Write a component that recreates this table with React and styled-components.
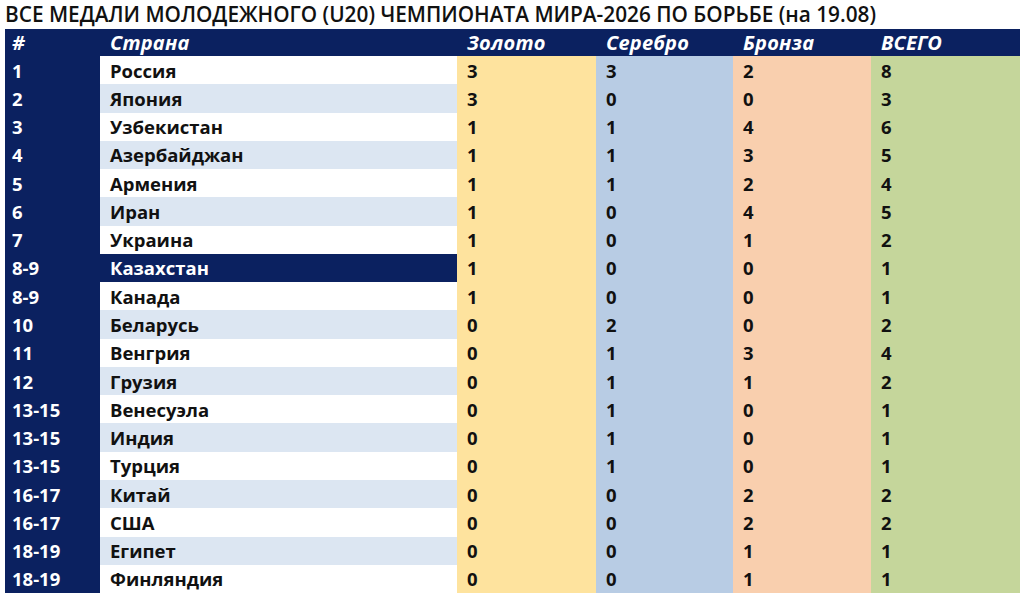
import React from "react";
import styled, { createGlobalStyle } from "styled-components";

const GlobalStyle = createGlobalStyle`
  body {
    margin: 0;
    background: #ffffff;
    font-family: "Open Sans", "Noto Sans", sans-serif;
  }
`;

const colors = {
  navy: "#0b2160",
  light: "#dce6f2",
  gold: "#fee39e",
  silver: "#b8cce4",
  bronze: "#f9cfae",
  total: "#c5d69b",
};

const Page = styled.div`
  width: 1024px;
  height: 599px;
  overflow: hidden;
  display: flex;
  flex-direction: column;
`;

const Title = styled.h1`
  margin: 0;
  height: 29px;
  padding-left: 5px;
  font-size: 20.8px;
  line-height: 28px;
  font-weight: 600;
  color: #111;
  white-space: nowrap;
`;

const Table = styled.div`
  margin: 0 4px 0 5px;
  display: grid;
  grid-template-columns: 95px 357px 139px 137px 138px 1fr;
  grid-auto-rows: 28.27px;
  grid-template-rows: 27px;
`;

const HeadCell = styled.div`
  background: ${colors.navy};
  color: #fff;
  font-style: italic;
  font-weight: 700;
  font-size: 20px;
  letter-spacing: 0.2px;
  display: flex;
  align-items: center;
  padding-left: ${(p) => (p.$first ? "7px" : "10px")};
`;

const Cell = styled.div`
  background: ${(p) => p.$bg};
  color: ${(p) => (p.$dark ? "#fff" : "#111")};
  font-weight: 700;
  font-size: 18.5px;
  display: flex;
  align-items: center;
  padding-left: ${(p) => (p.$first ? "7px" : "10px")};
  white-space: nowrap;
`;

const rows = [
  ["1", "Россия", 3, 3, 2, 8],
  ["2", "Япония", 3, 0, 0, 3],
  ["3", "Узбекистан", 1, 1, 4, 6],
  ["4", "Азербайджан", 1, 1, 3, 5],
  ["5", "Армения", 1, 1, 2, 4],
  ["6", "Иран", 1, 0, 4, 5],
  ["7", "Украина", 1, 0, 1, 2],
  ["8-9", "Казахстан", 1, 0, 0, 1],
  ["8-9", "Канада", 1, 0, 0, 1],
  ["10", "Беларусь", 0, 2, 0, 2],
  ["11", "Венгрия", 0, 1, 3, 4],
  ["12", "Грузия", 0, 1, 1, 2],
  ["13-15", "Венесуэла", 0, 1, 0, 1],
  ["13-15", "Индия", 0, 1, 0, 1],
  ["13-15", "Турция", 0, 1, 0, 1],
  ["16-17", "Китай", 0, 0, 2, 2],
  ["16-17", "США", 0, 0, 2, 2],
  ["18-19", "Египет", 0, 0, 1, 1],
  ["18-19", "Финляндия", 0, 0, 1, 1],
];

const headers = ["#", "Страна", "Золото", "Серебро", "Бронза", "ВСЕГО"];
const medalBg = [colors.gold, colors.silver, colors.bronze, colors.total];

export default function App() {
  return (
    <Page>
      <GlobalStyle />
      <Title>
        ВСЕ МЕДАЛИ МОЛОДЕЖНОГО (U20) ЧЕМПИОНАТА МИРА-2026 ПО БОРЬБЕ (на 19.08)
      </Title>
      <Table>
        {headers.map((h, i) => (
          <HeadCell key={h} $first={i === 0}>
            {h}
          </HeadCell>
        ))}
        {rows.map(([rank, country, ...medals], r) => {
          const highlight = country === "Казахстан";
          const countryBg = highlight
            ? colors.navy
            : r % 2 === 0
            ? "#ffffff"
            : colors.light;
          return (
            <React.Fragment key={country}>
              <Cell $first $dark $bg={colors.navy}>
                {rank}
              </Cell>
              <Cell $dark={highlight} $bg={countryBg}>
                {country}
              </Cell>
              {medals.map((m, i) => (
                <Cell key={i} $bg={medalBg[i]}>
                  {m}
                </Cell>
              ))}
            </React.Fragment>
          );
        })}
      </Table>
    </Page>
  );
}
